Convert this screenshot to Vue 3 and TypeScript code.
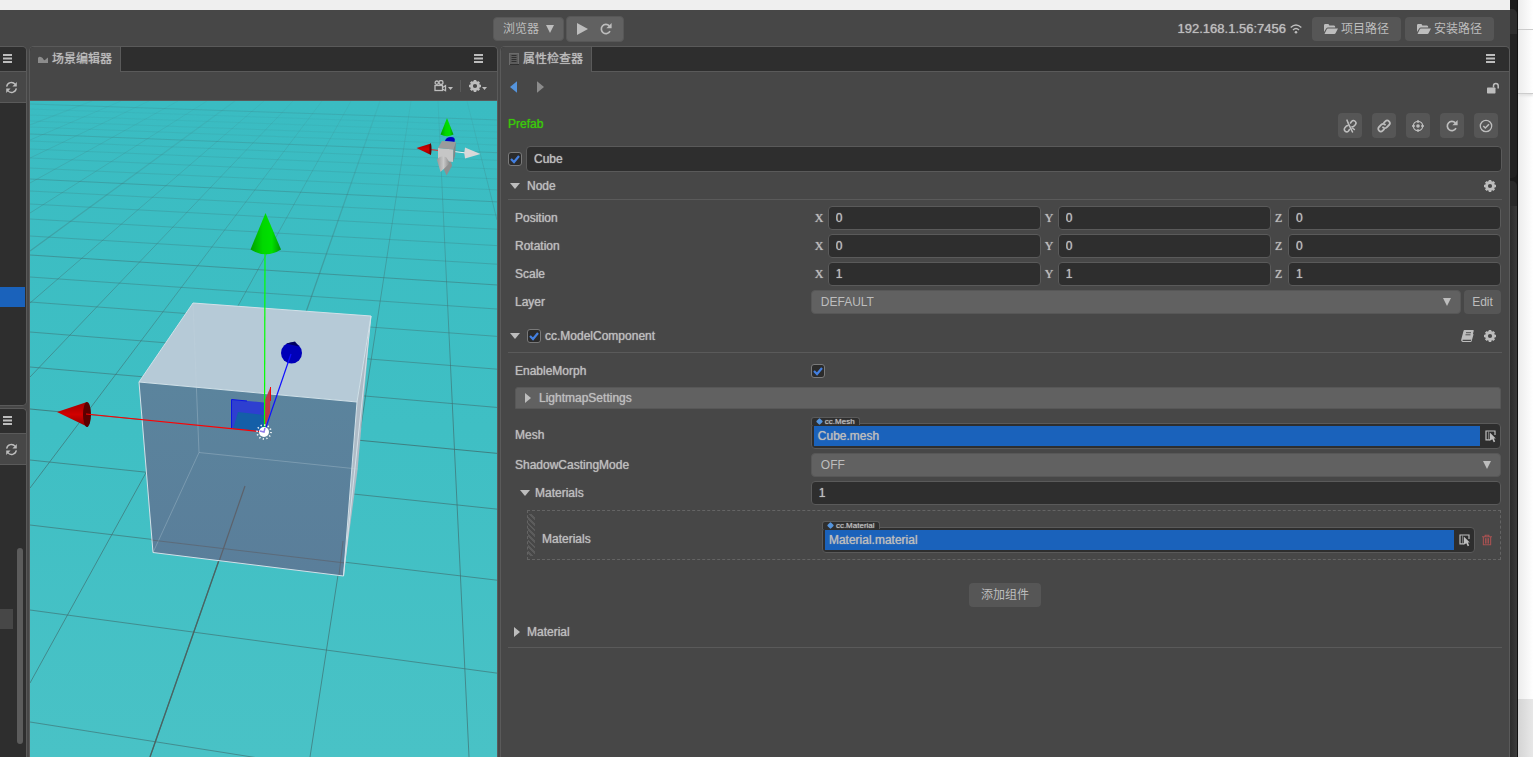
<script setup lang="ts">
import { ref, reactive } from 'vue'

interface VectorRow {
  label: string
  values: string[]
}

interface Line {
  x1: number
  y1: number
  x2: number
  y2: number
  o: number
  bold: boolean
}

const axes = ['X', 'Y', 'Z']
const nodeName = ref('Cube')
const nodeActive = ref(true)
const modelEnabled = ref(true)
const enableMorph = ref(true)
const layer = ref('DEFAULT')
const shadowMode = ref('OFF')
const materialCount = ref('1')

const vectors = reactive<VectorRow[]>([
  { label: 'Position', values: ['0', '0', '0'] },
  { label: 'Rotation', values: ['0', '0', '0'] },
  { label: 'Scale', values: ['1', '1', '1'] },
])

const prefabActions = [
  { icon: 'unlink', label: 'Unlink' },
  { icon: 'link', label: 'Link' },
  { icon: 'target', label: 'Locate' },
  { icon: 'reload', label: 'Revert' },
  { icon: 'check', label: 'Apply' },
]

const pathButtons = ['项目路径', '安装路径']

const rowStarts = [
  104, 109, 115, 121, 127, 134, 141, 149, 158, 168, 179, 191, 204, 219, 236, 255,
  277, 302, 332, 367, 409, 460, 525, 610, 722,
]

const rows: Line[] = rowStarts.map((y, i) => ({
  x1: 30,
  y1: y,
  x2: 497,
  y2: y + 467 * (0.04 + 0.0002 * (y - 134)),
  o: Math.min(0.65, 0.05 + Math.max(0, y - 100) / 500),
  bold: i % 5 === 0 && i < 24,
}))

const columns: Line[] = [
  [30, 125, 92, 101],
  [30, 140, 121, 101],
  [30, 158, 149, 101],
  [30, 183, 178, 101],
  [30, 213, 207, 101],
  [30, 251, 235, 101],
  [30, 303, 264, 101],
  [30, 377, 293, 101],
  [30, 488, 322, 101],
  [30, 683, 351, 101],
  [150, 757, 380, 101],
  [310, 757, 411, 101],
  [469, 757, 438, 101],
  [497, 220, 467, 101],
].map(([x1, y1, x2, y2], i) => ({ x1, y1, x2, y2, o: 1, bold: i % 5 === 0 }))
</script>

<template>
  <div class="screen">
    <svg class="defs" aria-hidden="true">
      <symbol id="i-menu" viewBox="0 0 9 9">
        <path d="M0 1h9M0 4.500h9M0 8h9" stroke="currentColor" stroke-width="1.800" />
      </symbol>
      <symbol id="i-sync" viewBox="0 0 14 14">
        <path d="M1.800 6A5.200 5.200 0 0 1 11 3.600M12.200 8A5.200 5.200 0 0 1 3 10.400" fill="none" stroke="currentColor" stroke-width="1.500" />
        <path d="M12.700 1v5H8zM1.300 13V8H6z" fill="currentColor" />
      </symbol>
      <symbol id="i-gear" viewBox="0 0 12 12">
        <circle cx="6" cy="6" r="3.500" fill="none" stroke="currentColor" stroke-width="2.800" />
        <path d="M6 0v2M6 10v2M0 6h2M10 6h2M1.800 1.800l1.400 1.400M8.800 8.800l1.400 1.400M10.200 1.800L8.800 3.200M3.200 8.800l-1.400 1.400" stroke="currentColor" stroke-width="2.600" />
      </symbol>
      <symbol id="i-camera" viewBox="0 0 13 12">
        <g fill="none" stroke="currentColor" stroke-width="1.300">
          <circle cx="2.800" cy="2.700" r="1.700" />
          <circle cx="7" cy="2.500" r="2" />
          <rect x="1" y="5.500" width="7.500" height="5" />
          <path d="M8.500 7.500l3-1.800v5l-3-1.700" />
        </g>
      </symbol>
      <symbol id="i-caret" viewBox="0 0 10 6"><path d="M0 0h10L5 6z" fill="currentColor" /></symbol>
      <symbol id="i-right" viewBox="0 0 6 10"><path d="M0 0v10l6-5z" fill="currentColor" /></symbol>
      <symbol id="i-left" viewBox="0 0 6 10"><path d="M6 0v10L0 5z" fill="currentColor" /></symbol>
      <symbol id="i-drop" viewBox="0 0 8 8"><path d="M0 0h8L4 8z" fill="currentColor" /></symbol>
      <symbol id="i-play" viewBox="0 0 11 12"><path d="M0 0v12l11-6z" fill="currentColor" /></symbol>
      <symbol id="i-reload" viewBox="0 0 12 12">
        <path d="M10 8.200A4.600 4.600 0 1 1 9.300 2.900" fill="none" stroke="currentColor" stroke-width="1.700" />
        <path d="M11.600 0v5.200H6.400z" fill="currentColor" />
      </symbol>
      <symbol id="i-folder" viewBox="0 0 14 10">
        <path d="M0 8V1.200Q0 0 1.200 0h3Q5 0 5.300 1.500H10q1.200 0 1.200 1.500v.6H4Q2.800 3.600 2 4.800z" fill="currentColor" />
        <path d="M3.800 4.500H14L11.500 9.200q-.3.800-1.200.8H.5l2.300-4.700q.3-.8 1-.8z" fill="currentColor" />
      </symbol>
      <symbol id="i-wifi" viewBox="0 0 12 10">
        <path d="M.7 3.500Q6-1.500 11.300 3.500M3 6Q6 3.200 9 6" fill="none" stroke="currentColor" stroke-width="1.400" />
        <circle cx="6" cy="8.200" r="1.300" fill="currentColor" />
      </symbol>
      <symbol id="i-unlock" viewBox="0 0 12 11">
        <rect x="0" y="5" width="8.500" height="6" rx=".7" fill="currentColor" />
        <path d="M6.500 5V3.300a2.350 2.350 0 0 1 4.700 0V6" fill="none" stroke="currentColor" stroke-width="1.500" />
      </symbol>
      <symbol id="i-link" viewBox="0 0 14 14">
        <g fill="none" stroke="currentColor" stroke-width="1.800" stroke-linecap="round">
          <path d="M6 8.300a2.600 2.600 0 0 0 3.700 0l2.300-2.300a2.600 2.600 0 0 0-3.700-3.700L7 3.600" />
          <path d="M8 5.700a2.600 2.600 0 0 0-3.700 0L2 8a2.600 2.600 0 0 0 3.700 3.700L7 10.400" />
        </g>
      </symbol>
      <symbol id="i-unlink" viewBox="0 0 14 14">
        <g fill="none" stroke="currentColor" stroke-width="1.600" stroke-linecap="round">
          <path d="M7.500 4L8.600 2.500a2.400 2.400 0 0 1 3.700 3.200L10.500 7.500 9 7.800" />
          <path d="M5 6.500L3.500 7 1.900 8.800a2.400 2.400 0 0 0 3.600 3.200L6.500 10.500" />
          <path d="M4 1.200l1.500 3.600L9.500 13M9.500 9l1.800 1.500" />
        </g>
      </symbol>
      <symbol id="i-target" viewBox="0 0 14 14">
        <circle cx="7" cy="7" r="4.700" fill="none" stroke="currentColor" stroke-width="1.300" />
        <circle cx="7" cy="7" r="1.800" fill="currentColor" />
        <path d="M7 1v3M7 10v3M1 7h3M10 7h3" stroke="currentColor" stroke-width="1.300" />
      </symbol>
      <symbol id="i-check" viewBox="0 0 14 14">
        <circle cx="7" cy="7" r="5.700" fill="none" stroke="currentColor" stroke-width="1.300" />
        <path d="M4.300 7l2 2L10 5.300" fill="none" stroke="currentColor" stroke-width="1.500" />
      </symbol>
      <symbol id="i-book" viewBox="0 0 13 12">
        <path d="M3.500 0H12q1 0 .7 1L10.500 9q-.2.700-1 .7H2q-.8 0-.6.600t1 .6h7.400L12 3.500l.5 1L10.700 11q-.2.900-1.200.9H1.600Q-.2 11.700.2 9.700L2.500 1q.2-1 1-1z" fill="currentColor" />
        <path d="M5 2.700h5M4.500 4.800h5" stroke="#474747" stroke-width=".9" />
      </symbol>
      <symbol id="i-pick" viewBox="0 0 12 13">
        <path d="M5 9.800H1V1H10V5" fill="none" stroke="currentColor" stroke-width="1.200" />
        <path d="M3.500 1.500v8" stroke="currentColor" stroke-width=".5" />
        <path d="M4.800 2.500l6 6H8.800l1.400 3-1.500.7-1.400-3-2.500 1.600z" fill="currentColor" />
      </symbol>
      <symbol id="i-trash" viewBox="0 0 11 12">
        <path d="M0 2.500h11M3.500 2.300V.7h4v1.600M1.500 2.500v8.800h8V2.500" fill="none" stroke="currentColor" stroke-width="1.200" />
        <path d="M3.800 4v6M5.500 4v6M7.200 4v6" stroke="currentColor" stroke-width="1.100" />
      </symbol>
      <symbol id="i-scene" viewBox="0 0 10 8">
        <path d="M0 3Q1 1 3 2q2 .5 2.500 2.500Q7 6 8 4l2-1.500V8H0z" fill="currentColor" />
      </symbol>
      <symbol id="i-sheet" viewBox="0 0 10 12">
        <rect x=".5" y=".5" width="9" height="11" fill="#5c5c5c" stroke="#6c6c6c" />
        <path d="M2.500 2.500h5M2.500 4.500h5M2.500 6.500h5M2.500 8.500h5M1 11.500h9" stroke="#303030" />
      </symbol>
    </svg>

    <div class="editor">
      <div class="titlebar"></div>
      <header class="toolbar">
        <div class="run">
          <button class="platform" type="button">浏览器<svg class="ic8"><use href="#i-drop" /></svg></button>
          <div class="play">
            <button type="button" aria-label="Play"><svg class="ic-play"><use href="#i-play" /></svg></button>
            <button type="button" aria-label="Reload"><svg class="ic12"><use href="#i-reload" /></svg></button>
          </div>
        </div>
        <div class="paths">
          <span class="address">192.168.1.56:7456</span>
          <svg class="ic-wifi"><use href="#i-wifi" /></svg>
          <button v-for="p in pathButtons" :key="p" class="btn" type="button">
            <svg class="ic-folder"><use href="#i-folder" /></svg>{{ p }}
          </button>
        </div>
      </header>

      <main class="body">
        <div class="left">
          <section class="panel side">
            <div class="tabs"><button class="plain burger" type="button" aria-label="Menu"><svg class="ic9"><use href="#i-menu" /></svg></button></div>
            <div class="side-tools"><button class="plain" type="button" aria-label="Refresh"><svg class="ic-sync"><use href="#i-sync" /></svg></button></div>
            <div class="tree"><div class="picked"></div></div>
          </section>
          <section class="panel side">
            <div class="tabs"><button class="plain burger" type="button" aria-label="Menu"><svg class="ic9"><use href="#i-menu" /></svg></button></div>
            <div class="side-tools"><button class="plain" type="button" aria-label="Refresh"><svg class="ic-sync"><use href="#i-sync" /></svg></button></div>
            <div class="assets">
              <div class="asset-row"></div>
              <div class="thumb"></div>
            </div>
          </section>
        </div>

        <section class="panel scene">
          <div class="tabs">
            <div class="tab"><svg class="ic-scene"><use href="#i-scene" /></svg>场景编辑器</div>
            <button class="plain burger menu" type="button" aria-label="Menu"><svg class="ic9"><use href="#i-menu" /></svg></button>
          </div>
          <div class="scene-tools">
            <button class="plain" type="button" aria-label="Camera"><svg class="ic-cam"><use href="#i-camera" /></svg><svg class="tiny"><use href="#i-caret" /></svg></button>
            <span class="split"></span>
            <button class="plain" type="button" aria-label="Settings"><svg class="ic12"><use href="#i-gear" /></svg><svg class="tiny"><use href="#i-caret" /></svg></button>
          </div>
          <svg class="view" viewBox="30 101 467 656" preserveAspectRatio="xMidYMin slice">
            <defs>
              <linearGradient id="water" x1="0" y1="0" x2="0" y2="1">
                <stop offset="0" stop-color="#3abcc2" />
                <stop offset=".5" stop-color="#3fbfc4" />
                <stop offset="1" stop-color="#49c2c6" />
              </linearGradient>
              <linearGradient id="fade" gradientUnits="userSpaceOnUse" x1="0" y1="101" x2="0" y2="420">
                <stop offset="0" stop-color="#3f7072" stop-opacity=".08" />
                <stop offset=".5" stop-color="#3f7072" stop-opacity=".4" />
                <stop offset="1" stop-color="#3f7072" stop-opacity=".7" />
              </linearGradient>
              <linearGradient id="front" x1="0" y1="0" x2="0" y2="1">
                <stop offset="0" stop-color="#5b849d" />
                <stop offset="1" stop-color="#5a7e9a" />
              </linearGradient>
              <linearGradient id="green" x1="0" y1="0" x2="1" y2="0">
                <stop offset="0" stop-color="#00a000" />
                <stop offset=".4" stop-color="#00d800" />
                <stop offset=".7" stop-color="#00e000" />
                <stop offset="1" stop-color="#009800" />
              </linearGradient>
              <linearGradient id="red" x1="0" y1="0" x2="0" y2="1">
                <stop offset="0" stop-color="#a00000" />
                <stop offset=".5" stop-color="#d20000" />
                <stop offset="1" stop-color="#8c0000" />
              </linearGradient>
              <linearGradient id="grey" x1="0" y1="0" x2="1" y2="0">
                <stop offset="0" stop-color="#999" />
                <stop offset=".5" stop-color="#c8c8c8" />
                <stop offset="1" stop-color="#888" />
              </linearGradient>
            </defs>
            <rect x="30" y="101" width="467" height="656" fill="url(#water)" />
            <line v-for="(l, i) in rows" :key="'r' + i" :x1="l.x1" :y1="l.y1" :x2="l.x2" :y2="l.y2" stroke="#3f7072" :stroke-opacity="l.bold ? l.o + 0.15 : l.o" />
            <line v-for="(l, i) in columns" :key="'c' + i" :x1="l.x1" :y1="l.y1" :x2="l.x2" :y2="l.y2" stroke="url(#fade)" :stroke-width="l.bold ? 1.3 : 1" />
            <path d="M245 486L150 757" stroke="#4b6260" stroke-width="1.200" />

            <path d="M371 316L357 402 343.500 576 357.700 469z" fill="#aebbc6" />
            <path d="M193 303L371 316 357 402 139 382z" fill="#b6cad7" />
            <path d="M139 382L357 402 343.500 576 153 552.500z" fill="url(#front)" />
            <g fill="none" stroke="#c3d5df" stroke-opacity=".3">
              <path d="M193 303L199 452.500 357.700 469M199 452.500L153 552.500" />
            </g>
            <g fill="none" stroke="#5c626c" stroke-width="1.200">
              <path d="M245 486L219.500 560" />
              <path d="M151 540L345 563M343 541L339 575" stroke-opacity=".7" stroke-width="1" />
            </g>
            <g fill="none" stroke="#d3e0e8">
              <path d="M193 303L371 316 357 402 139 382zM371 316L343.500 576M357 402L343.500 576 153 552.500 139 382" />
            </g>

            <path d="M231.500 399.500L264 402.500V431L232 428.500z" fill="#2e3fd0" />
            <path d="M238 412L264 415V431L233 429z" fill="#145fa8" />
            <path d="M231.500 429V399.500L247 401" fill="none" stroke="#0a14e0" />
            <path d="M270.500 387L270 413 265 427V400z" fill="#c03848" />
            <path d="M270.500 387V401" stroke="#f00808" />
            <path d="M57 412L87 402 88 427z" fill="url(#red)" />
            <ellipse cx="87" cy="414.500" rx="4" ry="12.500" fill="#5b0000" />
            <path d="M86 414L264 432" stroke="#f00" stroke-width="1.200" />
            <path d="M265 254L264.500 428" stroke="#0f0" stroke-width="1.200" />
            <path d="M265.500 213L281 249.500Q266 259 250.500 249.500z" fill="url(#green)" />
            <circle cx="291.500" cy="353" r="10.500" fill="#0000b8" />
            <path d="M286 343.500l9-2 4 5z" fill="#000060" />
            <path d="M291 354L265 430" stroke="#1010ff" stroke-width="1.200" />
            <circle cx="264" cy="432" r="5" fill="#fff" />
            <circle cx="264" cy="432" r="7" fill="none" stroke="#fff" stroke-width="1.600" stroke-dasharray="1.200 2.465" />
            <path d="M260 431l4 1 1-4" fill="none" stroke="#8f7be8" stroke-width="1.500" />

            <path d="M447 118L453.500 134.500Q447 138 440.500 134.500z" fill="url(#green)" />
            <path d="M445 141q1-4 6-4t3.500 5z" fill="#0000c0" />
            <path d="M430 149.500l9 1" stroke="#e03030" />
            <path d="M416.500 148L431 143.500V155z" fill="url(#red)" />
            <ellipse cx="430.500" cy="149" rx="1" ry="5.500" fill="#600000" />
            <path d="M454 151.500l12 1.500" stroke="#f0f0f0" />
            <path d="M480.500 154L465 147.500Q463.500 153 465 158.500z" fill="#d8d8d8" />
            <path d="M442 165l9-4 1 5-5.500 9.500z" fill="#8f8f8f" />
            <path d="M438 148L453.500 149.500 453 162 438 160z" fill="#c6c6c6" />
            <path d="M438 148L442 141 456 142 453.500 149.500z" fill="#9b9b9b" />
            <path d="M456 142L453.500 149.500 453 162 455 156z" fill="#858585" />
            <path d="M437 160Q439 155 446 157L450 163 440.500 172z" fill="url(#grey)" />
          </svg>
        </section>

        <section class="panel inspector">
          <div class="tabs">
            <div class="tab"><svg class="ic-sheet"><use href="#i-sheet" /></svg>属性检查器</div>
            <button class="plain burger menu" type="button" aria-label="Menu"><svg class="ic9"><use href="#i-menu" /></svg></button>
          </div>
          <div class="content">
            <div class="nav">
              <button class="plain back" type="button" aria-label="Back"><svg class="ic-arrow"><use href="#i-left" /></svg></button>
              <button class="plain next" type="button" aria-label="Forward"><svg class="ic-arrow"><use href="#i-right" /></svg></button>
              <button class="plain lock" type="button" aria-label="Lock"><svg class="ic12"><use href="#i-unlock" /></svg></button>
            </div>

            <div class="prefab">
              <span class="strong">Prefab</span>
              <div class="actions">
                <button v-for="a in prefabActions" :key="a.icon" class="btn" type="button" :aria-label="a.label">
                  <svg :class="a.icon === 'reload' ? 'ic12' : 'ic14'"><use :href="'#i-' + a.icon" /></svg>
                </button>
              </div>
            </div>

            <div class="name">
              <input v-model="nodeActive" class="tick" type="checkbox" aria-label="Active" />
              <input v-model="nodeName" class="field" type="text" aria-label="Name" />
            </div>

            <div class="head">
              <svg class="caret"><use href="#i-caret" /></svg>
              <h2 class="strong">Node</h2>
              <button class="plain end" type="button" aria-label="Node settings"><svg class="ic12"><use href="#i-gear" /></svg></button>
            </div>

            <div class="props">
              <div v-for="v in vectors" :key="v.label" class="prop">
                <span class="label">{{ v.label }}</span>
                <div class="vector">
                  <label v-for="(axis, i) in axes" :key="axis">
                    <span>{{ axis }}</span>
                    <input v-model="v.values[i]" class="field" type="text" />
                  </label>
                </div>
              </div>
              <div class="prop">
                <label class="label" for="layer">Layer</label>
                <div class="pair">
                  <div class="choice">
                    <select id="layer" v-model="layer"><option>DEFAULT</option></select>
                    <svg class="ic8"><use href="#i-drop" /></svg>
                  </div>
                  <button class="btn edit" type="button">Edit</button>
                </div>
              </div>
            </div>

            <div class="head model">
              <svg class="caret"><use href="#i-caret" /></svg>
              <input id="model" v-model="modelEnabled" class="tick" type="checkbox" />
              <label class="strong" for="model">cc.ModelComponent</label>
              <button class="plain end" type="button" aria-label="Manual"><svg class="ic-book"><use href="#i-book" /></svg></button>
              <button class="plain" type="button" aria-label="Component settings"><svg class="ic12"><use href="#i-gear" /></svg></button>
            </div>

            <div class="props">
              <div class="prop">
                <label class="label" for="morph">EnableMorph</label>
                <div class="pair"><input id="morph" v-model="enableMorph" class="tick" type="checkbox" /></div>
              </div>
              <button class="fold strong" type="button"><svg class="ic-fold"><use href="#i-right" /></svg>LightmapSettings</button>
              <div class="prop asset">
                <span class="label">Mesh</span>
                <div class="ref">
                  <span class="kind strong"><i></i>cc.Mesh</span>
                  <div class="slot">
                    <span class="value strong">Cube.mesh</span>
                    <button class="plain" type="button" aria-label="Pick mesh"><svg class="ic-pick"><use href="#i-pick" /></svg></button>
                  </div>
                </div>
              </div>
              <div class="prop">
                <label class="label" for="shadow">ShadowCastingMode</label>
                <div class="choice">
                  <select id="shadow" v-model="shadowMode"><option>OFF</option></select>
                  <svg class="ic8"><use href="#i-drop" /></svg>
                </div>
              </div>
              <div class="prop">
                <label class="label nested" for="count"><svg class="caret"><use href="#i-caret" /></svg>Materials</label>
                <input id="count" v-model="materialCount" class="field" type="text" />
              </div>
              <div class="item">
                <span class="grip"></span>
                <div class="prop asset">
                  <span class="label">Materials</span>
                  <div class="ref">
                    <span class="kind strong"><i></i>cc.Material</span>
                    <div class="slot">
                      <span class="value strong">Material.material</span>
                      <button class="plain" type="button" aria-label="Pick material"><svg class="ic-pick"><use href="#i-pick" /></svg></button>
                    </div>
                  </div>
                </div>
                <button class="plain trash" type="button" aria-label="Delete"><svg class="ic-trash"><use href="#i-trash" /></svg></button>
              </div>
            </div>

            <button class="btn add" type="button">添加组件</button>

            <div class="head last">
              <svg class="ic-fold"><use href="#i-right" /></svg>
              <h2 class="strong">Material</h2>
            </div>
          </div>
        </section>
      </main>
    </div>

    <div class="behind">
      <div class="b1"></div>
      <div class="b2"></div>
      <div class="b3"></div>
      <div class="b4"></div>
    </div>
    <div class="page">
      <div class="p1"></div>
      <div class="p2"></div>
      <div class="p3"></div>
      <div class="p4"></div>
    </div>
  </div>
</template>

<style>
body {
  margin: 0;
  background: #474747;
}
</style>

<style scoped>
* {
  box-sizing: border-box;
}
.screen {
  display: grid;
  grid-template-columns: minmax(0, 1fr) 8px 15px;
  height: 100vh;
  overflow: hidden;
  background: #474747;
  color: #bdbdbd;
  font: 12px/16px "Liberation Sans", "Noto Sans CJK SC", sans-serif;
}
.defs {
  position: absolute;
  width: 0;
  height: 0;
}
button,
input,
select {
  margin: 0;
  padding: 0;
  border: 0;
  color: inherit;
  font: inherit;
}
svg {
  display: block;
  flex: none;
}
h2 {
  margin: 0;
  font: inherit;
}
.strong,
.label,
.field,
.address,
.tab {
  text-shadow: 0 0 1px currentColor;
}
.plain {
  display: flex;
  align-items: center;
  background: none;
}
.ic8 { width: 8px; height: 8px; }
.ic9 { width: 9px; height: 9px; }
.ic12 { width: 12px; height: 12px; }
.ic14 { width: 14px; height: 14px; }
.ic-play { width: 11px; height: 12px; }
.ic-folder { width: 14px; height: 10px; }
.ic-wifi { width: 12px; height: 10px; }
.ic-sync { width: 13px; height: 13px; }
.ic-cam { width: 13px; height: 12px; }
.tiny { width: 5px; height: 3px; margin: 5px 0 0 1px; }
.ic-scene { width: 10px; height: 8px; color: #8c8c8c; }
.ic-sheet { width: 10px; height: 12px; }
.ic-arrow { width: 7px; height: 12px; }
.ic-fold { width: 6px; height: 10px; }
.ic-book { width: 13px; height: 12px; }
.ic-pick { width: 12px; height: 13px; }
.ic-trash { width: 10px; height: 12px; }
.caret { width: 10px; height: 6px; }

.editor {
  display: flex;
  flex-direction: column;
  min-height: 0;
}
.titlebar {
  flex: none;
  height: 10px;
  background: #efefef;
}
.toolbar {
  flex: none;
  display: grid;
  grid-template-columns: 493fr auto 886fr;
  align-items: center;
  height: 36px;
}
.run {
  grid-column: 2;
  display: flex;
  align-items: center;
  gap: 2px;
  padding-top: 2px;
}
.platform {
  display: flex;
  align-items: center;
  gap: 7px;
  height: 24px;
  padding: 0 9px;
  border: 1px solid #575757;
  border-radius: 4px;
  background: #616161;
}
.play {
  display: flex;
  gap: 12px;
  align-items: center;
  width: 58px;
  height: 26px;
  padding-left: 10px;
  border: 1px solid #575757;
  border-radius: 4px;
  background: #616161;
}
.play button {
  display: flex;
  background: none;
}
.paths {
  display: flex;
  align-items: center;
  justify-content: flex-end;
  gap: 4px;
  padding: 2px 16px 0 0;
}
.address {
  font-size: 13px;
}
.ic-wifi {
  margin-right: 6px;
}
.btn {
  display: flex;
  align-items: center;
  justify-content: center;
  height: 24px;
  border-radius: 4px;
  background: #565656;
}
.paths .btn {
  gap: 3px;
  width: 89px;
}

.body {
  flex: 1;
  min-height: 0;
  display: grid;
  grid-template-columns: 27px minmax(0, 469fr) minmax(0, 1010fr);
  gap: 2px;
}
.left {
  display: grid;
  grid-template-rows: minmax(0, 360fr) minmax(0, 349fr);
  gap: 2px;
}
.panel {
  display: flex;
  flex-direction: column;
  min-height: 0;
  border: 1px solid #5a5a5a;
  border-bottom: 0;
  border-radius: 5px 5px 0 0;
  overflow: hidden;
}
.side {
  border-left: 0;
  border-radius: 0 5px 0 0;
}
.side:first-child {
  border-bottom: 1px solid #5a5a5a;
  border-radius: 0 5px 5px 0;
}
.tabs {
  flex: none;
  display: flex;
  height: 25px;
  border-bottom: 1px solid #5a5a5a;
  background: #2e2e2e;
}
.side .tabs {
  padding-left: 3px;
}
.burger {
  padding-bottom: 2px;
}
.side-tools {
  flex: none;
  display: flex;
  height: 31px;
  padding-left: 5px;
  border-bottom: 1px solid #5a5a5a;
}
.tree,
.assets {
  flex: 1;
  background: #2e2e2e;
}
.picked {
  height: 20px;
  margin: 184px 1px 0 0;
  background: #1a62bb;
}
.assets {
  display: flex;
  justify-content: space-between;
  align-items: flex-start;
  padding: 83px 3px 13px 0;
}
.asset-row {
  width: 13px;
  height: 20px;
  margin-top: 61px;
  background: #474747;
}
.thumb {
  width: 6px;
  height: 100%;
  border-radius: 3px;
  background: #5c5c5c;
}
.tab {
  display: flex;
  align-items: center;
  gap: 4px;
  height: 25px;
  padding: 0 8px 2px;
  border-right: 1px solid #5a5a5a;
  background: #474747;
}
.menu {
  margin-left: auto;
  padding-right: 14px;
}
.scene-tools {
  flex: none;
  display: flex;
  align-items: center;
  justify-content: flex-end;
  height: 29px;
  padding-right: 10px;
  border-bottom: 1px solid #5a5a5a;
}
.split {
  width: 1px;
  height: 12px;
  margin: 0 8px 0 7px;
  background: #5a5a5a;
}
.view {
  flex: 1;
  width: 100%;
  min-height: 0;
}

.content {
  flex: 1;
  padding: 0 7px;
}
.nav {
  display: flex;
  align-items: center;
  height: 29px;
  padding-left: 2px;
}
.back {
  color: #5594dc;
}
.next {
  margin-left: 20px;
  color: #8c8c8c;
}
.lock {
  margin: 2px 3px 0 auto;
}
.prefab {
  display: flex;
  justify-content: space-between;
  height: 25px;
  margin-top: 12px;
  padding-right: 4px;
  color: #3bc80c;
  line-height: 22px;
}
.actions {
  display: flex;
  gap: 10px;
  color: #bdbdbd;
}
.actions .btn {
  width: 24px;
  height: 25px;
}
.name {
  display: flex;
  align-items: center;
  gap: 4px;
  height: 26px;
  margin-top: 8px;
}
.tick {
  appearance: none;
  flex: none;
  width: 14px;
  height: 14px;
  border: 1px solid #7a7a7a;
  border-radius: 3px;
  background: #2b2b2b;
}
.tick:checked {
  background: #2b2b2b url("data:image/svg+xml,%3Csvg xmlns='http://www.w3.org/2000/svg' viewBox='0 0 12 12'%3E%3Cpath d='M2 6l3 3 5-6' fill='none' stroke='%23437fe0' stroke-width='2.200'/%3E%3C/svg%3E") center / 12px no-repeat;
}
.field {
  width: 100%;
  min-width: 0;
  height: 24px;
  padding: 0 7px;
  border: 1px solid #5a5a5a;
  border-radius: 4px;
  background: #2e2e2e;
}
.name .field {
  height: 26px;
}
.head {
  display: flex;
  align-items: center;
  height: 28px;
  padding: 0 6px 0 2px;
  border-bottom: 1px solid #5a5a5a;
}
.head h2 {
  margin-left: 7px;
}
.end {
  margin-left: auto;
}
.model {
  height: 34px;
  margin-top: 5px;
}
.model .tick {
  margin: 0 4px 0 7px;
}
.model .plain:last-child {
  margin-left: 10px;
}
.props {
  display: flex;
  flex-direction: column;
  gap: 4px;
  margin-top: 6px;
  padding: 0 1px 0 7px;
}
.prop {
  display: grid;
  grid-template-columns: minmax(0, 3fr) minmax(0, 7fr);
  align-items: center;
  min-height: 24px;
}
.vector {
  display: grid;
  grid-template-columns: repeat(3, minmax(0, 1fr));
}
.vector label {
  display: grid;
  grid-template-columns: 17px minmax(0, 1fr);
  align-items: center;
}
.vector span {
  padding-left: 4px;
  font-family: "Liberation Serif", serif;
  text-shadow: 0 0 1px currentColor;
}
.pair {
  display: flex;
  align-items: center;
  gap: 3px;
}
.choice {
  position: relative;
  flex: 1;
}
.choice select {
  appearance: none;
  display: block;
  width: 100%;
  height: 24px;
  padding: 0 9px;
  border: 1px solid #575757;
  border-radius: 4px;
  background: #616161;
}
.choice svg {
  position: absolute;
  top: 8px;
  right: 10px;
  pointer-events: none;
}
.edit {
  width: 37px;
}
.fold {
  display: flex;
  align-items: center;
  gap: 8px;
  height: 22px;
  padding-left: 9px;
  border: 1px solid #575757;
  border-radius: 3px 3px 0 0;
  background: #616161;
}
.asset {
  align-items: end;
}
.fold + .asset {
  margin-top: 4px;
}
.asset .label {
  line-height: 28px;
}
.ref {
  display: flex;
  flex-direction: column;
  align-items: flex-start;
}
.kind {
  z-index: 1;
  display: flex;
  align-items: center;
  gap: 3px;
  height: 8px;
  margin-bottom: -2px;
  padding: 0 4px;
  border: 1px solid #5a5a5a;
  border-bottom: 0;
  border-radius: 3px 3px 0 0;
  background: #2e2e2e;
  font-size: 8px;
  line-height: 8px;
}
.kind i {
  width: 5px;
  height: 5px;
  margin-left: 1px;
  border-radius: 1px;
  background: #5594dc;
  transform: rotate(45deg);
}
.slot {
  display: flex;
  width: 100%;
  height: 26px;
  padding: 2px 0 2px 2px;
  border: 1px solid #5a5a5a;
  border-radius: 4px;
  background: #2e2e2e;
}
.value {
  flex: 1;
  padding-left: 4px;
  background: #1a62bb;
  line-height: 20px;
}
.slot .plain {
  width: 20px;
  padding-left: 5px;
}
.nested {
  display: flex;
  align-items: center;
  gap: 5px;
  padding-left: 5px;
}
.item {
  display: flex;
  height: 50px;
  margin: 1px 0 0 12px;
  border: 1px dashed #646464;
}
.grip {
  width: 7px;
  margin: 3px 7px 3px 0;
  background: repeating-linear-gradient(45deg, #474747 0 2px, #5c5c5c 2px 4px);
}
.item .prop {
  flex: 1;
  padding-bottom: 6px;
}
.trash {
  width: 25px;
  padding: 10px 0 0 7px;
  color: #a85252;
}
.add {
  width: 72px;
  margin: 23px auto 0;
}
.last {
  height: 31px;
  margin-top: 10px;
  padding-left: 6px;
}

.behind,
.page {
  display: flex;
  flex-direction: column;
  overflow: hidden;
}
.behind {
  border-right: 1px solid #111;
  background: #1b1b1b;
}
.b1 { height: 25px; margin-top: 9px; border-radius: 0 5px 0 0; background: #2e2e2e; }
.b2 { height: 144px; border-radius: 0 0 5px 0; background: #222; }
.b3 { height: 25px; margin-top: 3px; border-radius: 0 5px 0 0; background: #2a2a2a; }
.b4 { flex: 1; background: linear-gradient(90deg, #2c2c2c, #3b3b3b); }
.page {
  background: linear-gradient(90deg, #ececec, #fff);
}
.p1 { height: 30px; border-bottom: 1px solid #ccc; }
.p2 { height: 64px; border-bottom: 1px solid #ccc; box-shadow: 0 2px 2px #e4e4e4; }
.p3 { height: 605px; }
.p4 { flex: 1; background: linear-gradient(90deg, #d4d4d4, #e8e8e8); }
</style>
